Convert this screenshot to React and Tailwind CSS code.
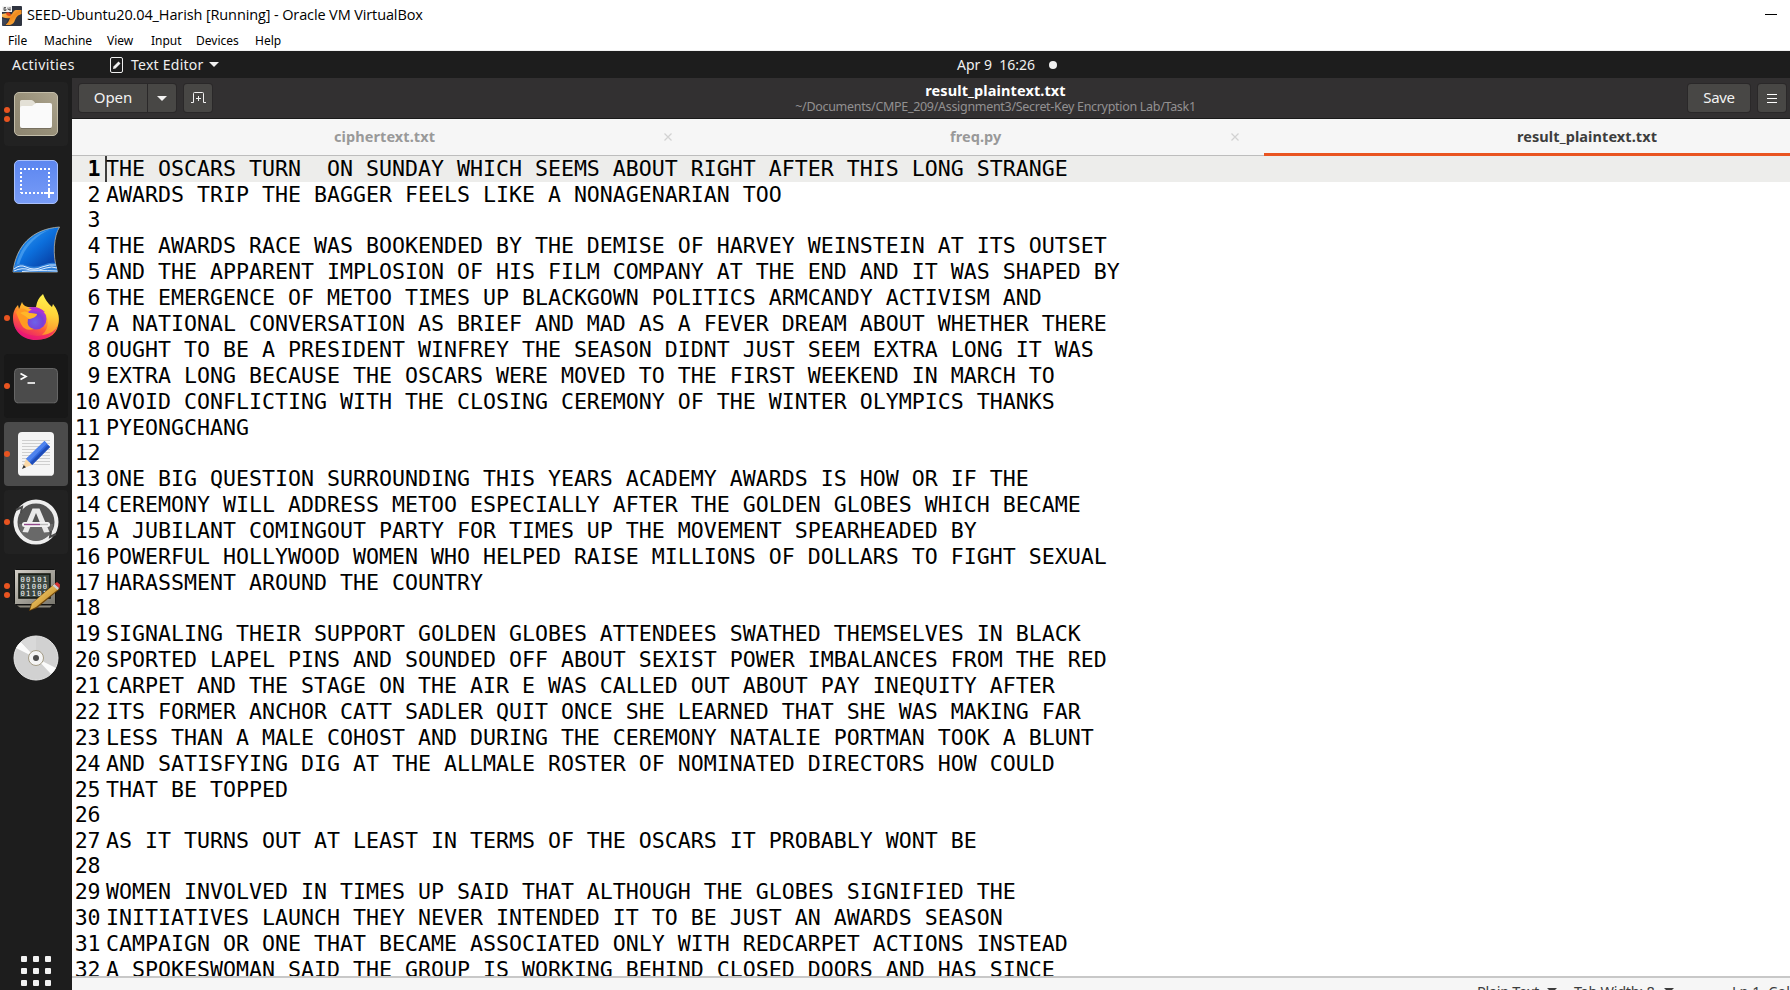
import React from 'react';

const LINES = [
  'THE OSCARS TURN  ON SUNDAY WHICH SEEMS ABOUT RIGHT AFTER THIS LONG STRANGE',
  'AWARDS TRIP THE BAGGER FEELS LIKE A NONAGENARIAN TOO',
  '',
  'THE AWARDS RACE WAS BOOKENDED BY THE DEMISE OF HARVEY WEINSTEIN AT ITS OUTSET',
  'AND THE APPARENT IMPLOSION OF HIS FILM COMPANY AT THE END AND IT WAS SHAPED BY',
  'THE EMERGENCE OF METOO TIMES UP BLACKGOWN POLITICS ARMCANDY ACTIVISM AND',
  'A NATIONAL CONVERSATION AS BRIEF AND MAD AS A FEVER DREAM ABOUT WHETHER THERE',
  'OUGHT TO BE A PRESIDENT WINFREY THE SEASON DIDNT JUST SEEM EXTRA LONG IT WAS',
  'EXTRA LONG BECAUSE THE OSCARS WERE MOVED TO THE FIRST WEEKEND IN MARCH TO',
  'AVOID CONFLICTING WITH THE CLOSING CEREMONY OF THE WINTER OLYMPICS THANKS',
  'PYEONGCHANG',
  '',
  'ONE BIG QUESTION SURROUNDING THIS YEARS ACADEMY AWARDS IS HOW OR IF THE',
  'CEREMONY WILL ADDRESS METOO ESPECIALLY AFTER THE GOLDEN GLOBES WHICH BECAME',
  'A JUBILANT COMINGOUT PARTY FOR TIMES UP THE MOVEMENT SPEARHEADED BY',
  'POWERFUL HOLLYWOOD WOMEN WHO HELPED RAISE MILLIONS OF DOLLARS TO FIGHT SEXUAL',
  'HARASSMENT AROUND THE COUNTRY',
  '',
  'SIGNALING THEIR SUPPORT GOLDEN GLOBES ATTENDEES SWATHED THEMSELVES IN BLACK',
  'SPORTED LAPEL PINS AND SOUNDED OFF ABOUT SEXIST POWER IMBALANCES FROM THE RED',
  'CARPET AND THE STAGE ON THE AIR E WAS CALLED OUT ABOUT PAY INEQUITY AFTER',
  'ITS FORMER ANCHOR CATT SADLER QUIT ONCE SHE LEARNED THAT SHE WAS MAKING FAR',
  'LESS THAN A MALE COHOST AND DURING THE CEREMONY NATALIE PORTMAN TOOK A BLUNT',
  'AND SATISFYING DIG AT THE ALLMALE ROSTER OF NOMINATED DIRECTORS HOW COULD',
  'THAT BE TOPPED',
  '',
  'AS IT TURNS OUT AT LEAST IN TERMS OF THE OSCARS IT PROBABLY WONT BE',
  '',
  'WOMEN INVOLVED IN TIMES UP SAID THAT ALTHOUGH THE GLOBES SIGNIFIED THE',
  'INITIATIVES LAUNCH THEY NEVER INTENDED IT TO BE JUST AN AWARDS SEASON',
  'CAMPAIGN OR ONE THAT BECAME ASSOCIATED ONLY WITH REDCARPET ACTIONS INSTEAD',
  'A SPOKESWOMAN SAID THE GROUP IS WORKING BEHIND CLOSED DOORS AND HAS SINCE',
];

function VBoxIcon() {
  return (
    <svg width="20" height="20" viewBox="0 0 20 20" className="mt-[2px] shrink-0">
      <defs>
        <linearGradient id="vb" x1="0" y1="0" x2="1" y2="1">
          <stop offset="0" stopColor="#ffd27a" />
          <stop offset=".5" stopColor="#f08a1c" />
          <stop offset="1" stopColor="#ffc45c" />
        </linearGradient>
      </defs>
      <rect width="20" height="20" rx="1" fill="#2f3440" />
      <path d="M0 8L5 7Q8 10 10 8Q12 4 14 4H19.500V8L16 9.500Q14 11 13 14Q12 18 8 19H3.500Q7 16 8 12Q5 13 0 11Z" fill="url(#vb)" />
      <path d="M4 7C6 5 9 7 9 9.500C7 10.500 4 9.500 4 7Z" fill="#e2471a" />
      <path d="M0 12.500Q3 14 6 13.500Q5 17 2 19.500H1L0 18.500Z" fill="#3f4657" />
      <rect width="10" height="6" fill="#f3f3f3" />
      <path d="M2 1.500h2M2 1.500v3h2v-1.500h-2M6 1.500v2h2.500M8 1v4" stroke="#555" fill="none" strokeWidth=".9" />
    </svg>
  );
}

function FilesIcon() {
  return (
    <svg width="46" height="46" viewBox="0 0 46 46">
      <defs>
        <linearGradient id="fi" x1="0" y1="1" x2="1" y2="0">
          <stop offset="0" stopColor="#8d8571" />
          <stop offset=".5" stopColor="#989079" />
          <stop offset="1" stopColor="#aca48e" />
        </linearGradient>
      </defs>
      <rect x="1.500" y="1.500" width="43" height="43" rx="4.500" fill="url(#fi)" stroke="#c3bda9" />
      <path d="M7 13V10.500Q7 9 8.500 9H18.500Q20 9 21 10.500L23 13H37Q39 13 39 15V23H7Z" fill="#e3e0d6" />
      <path d="M7 17Q7 15 9 15H19L23 12H37Q39 12 39 14V35Q39 37 37 37H9Q7 37 7 35Z" fill="#fafafa" />
      <path d="M8 37.500H38" stroke="#777060" />
    </svg>
  );
}

function ScreenshotIcon() {
  return (
    <svg width="46" height="46" viewBox="0 0 46 46">
      <defs>
        <linearGradient id="ss" x1="0" y1="0" x2="0" y2="1">
          <stop offset="0" stopColor="#5c86f0" />
          <stop offset="1" stopColor="#789cf7" />
        </linearGradient>
      </defs>
      <rect x="1.500" y="1.500" width="43" height="43" rx="4.500" fill="url(#ss)" stroke="#a9c0fb" />
      <path d="M7 10H38M8 34H31M8 13V34M36 13V28" stroke="#fff" strokeWidth="2" strokeDasharray="2 2" fill="none" />
      <path d="M36 29V39M31 34H41" stroke="#fff" strokeWidth="2" />
    </svg>
  );
}

function SharkIcon() {
  return (
    <svg width="48" height="48" viewBox="0 0 48 48">
      <defs>
        <linearGradient id="sh" x1="0.100" y1="0" x2="1" y2="1">
          <stop offset="0" stopColor="#38a0f5" />
          <stop offset=".45" stopColor="#0c6fdc" />
          <stop offset="1" stopColor="#052a8c" />
        </linearGradient>
      </defs>
      <path d="M1 46C4 20 20 3 47.500 1C42 10 40 28 45.500 46Z" fill="url(#sh)" stroke="#b9b6a8" strokeWidth=".8" />
      <path d="M4 40C8 22 20 8 38 3.500C22 10 11 24 7 39Z" fill="#67b5f7" opacity=".5" />
      <path d="M1 46L3 39Q9 37 14 39.500Q23 42 31 39Q38 36 43.500 37L45.500 46Z" fill="#2f7fd8" />
      <path d="M2 43Q8 38 14 41Q22 45 30 41Q38 38 44 39M2 45Q10 41 18 44Q28 45 34 42Q40 40 45 42M10 45.500Q25 44 45 45" fill="none" stroke="#dcecff" strokeWidth="1" />
    </svg>
  );
}

function FirefoxIcon() {
  return (
    <svg width="48" height="48" viewBox="0 0 48 48" className="-mt-[2px]">
      <defs>
        <linearGradient id="ff1" x1=".85" y1=".1" x2=".3" y2="1">
          <stop offset="0" stopColor="#fff24a" />
          <stop offset=".35" stopColor="#ffb02a" />
          <stop offset=".6" stopColor="#ff5f38" />
          <stop offset="1" stopColor="#e5127a" />
        </linearGradient>
        <linearGradient id="ff2" x1=".6" y1="0" x2=".5" y2="1">
          <stop offset="0" stopColor="#fff44f" />
          <stop offset=".5" stopColor="#ffd43a" />
          <stop offset="1" stopColor="#ff8f2c" />
        </linearGradient>
        <radialGradient id="ff3" cx=".45" cy=".65" r=".65">
          <stop offset="0" stopColor="#6d63e8" />
          <stop offset=".6" stopColor="#7a3fd6" />
          <stop offset="1" stopColor="#b435d8" />
        </radialGradient>
      </defs>
      <path d="M24 47C10 47 1 37 1 25C1 19 3 15 6 12L7 16L10 9Q11 13 16 14L30 14Q44 14 46 21Q50 46 24 47Z" fill="url(#ff1)" />
      <path d="M2 32Q7 46 24 47Q42 46 46 31Q40 43 25 43Q10 42 2 32Z" fill="#e91379" opacity=".55" />
      <path d="M31 1Q34 9 40 14L41 11Q49 21 46 32Q42 41 30 42Q38 35 35 24Q33 17 24 14Q25 6 31 1Z" fill="url(#ff2)" />
      <circle cx="24" cy="26" r="10.500" fill="url(#ff3)" />
      <path d="M16 15Q25 12 33 19Q27 18 22 18Q19 16 16 15Z" fill="#b32fd0" />
      <path d="M4 19Q11 12 17 20L25 21Q25 24 16 26Q14 34 22 36Q13 39 9 31Q6 25 4 19Z" fill="#ff9a22" />
      <path d="M8 20Q13 17 17 20L25 21Q24 25 17 26Q12 22 8 20Z" fill="#ffb629" />
    </svg>
  );
}

function TerminalIcon() {
  return (
    <svg width="46" height="38" viewBox="0 0 46 38">
      <rect x="1.500" y="1.500" width="43" height="34.500" rx="4" fill="#4b4b4b" stroke="#666" />
      <path d="M4 36.500H42" stroke="#2e2e2e" />
      <path d="M7.500 6.500L13 9.500L7.500 12.500" fill="none" stroke="#fff" strokeWidth="1.700" />
      <path d="M14.500 16H22" stroke="#fff" strokeWidth="1.600" />
    </svg>
  );
}

function EditorIcon() {
  return (
    <svg width="46" height="48" viewBox="0 0 46 48">
      <rect x="5" y="2" width="36" height="44" rx="4" fill="#f5f5f5" />
      <path d="M9 10.500H37M9 13.500H37M9 16.500H37M9 19.500H37M9 22.500H37M9 25.500H37M9 28.500H37M9 31.500H37M9 34.500H37" stroke="#cfcfcf" />
      <path d="M8 45.500H38" stroke="#ccc" />
      <path d="M31.500 11L37 17L19 35L13 29Z" fill="#2f66dc" />
      <path d="M31.500 11L34 13.500L16 32L13 29Z" fill="#4f83ee" />
      <path d="M35 15L37 17L19 35L17 33Z" fill="#1f4cb8" />
      <path d="M13 29L19 35L9.500 38.500Z" fill="#fbd9a7" />
      <path d="M10.700 35L13 37.200L9 39Z" fill="#333" />
    </svg>
  );
}

function SoftwareIcon() {
  return (
    <svg width="46" height="46" viewBox="0 0 46 46">
      <circle cx="23" cy="23" r="20.500" fill="#535353" stroke="#eee" strokeWidth="4" />
      <path d="M6 25H40A17 17 0 0 1 6 25Z" fill="#696969" />
      <path d="M3 11L9 8L8 14M43 35L37 38L38 32" fill="none" stroke="#4a4a4a" strokeWidth="2" />
      <path d="M19.500 9.500H26.500L36.500 33L31 33.500L23 14L15 33.500L9.500 33Z" fill="#e9e9e9" />
      <rect x="9" y="23" width="28" height="5" rx="2.500" fill="#f3f3f3" />
      <path d="M11 25.500H27" stroke="#924a8b" strokeWidth="1.400" />
      <path d="M27 25.500H35" stroke="#bbb" strokeWidth="1.400" />
    </svg>
  );
}

function HexIcon() {
  return (
    <svg width="48" height="48" viewBox="0 0 48 48">
      <defs>
        <linearGradient id="hx" x1="0" y1="0" x2="1" y2="1">
          <stop offset="0" stopColor="#d4d0c8" />
          <stop offset="1" stopColor="#77756c" />
        </linearGradient>
        <linearGradient id="pn" x1="0" y1="0" x2="1" y2="1">
          <stop offset="0" stopColor="#ffe48a" />
          <stop offset="1" stopColor="#b4720a" />
        </linearGradient>
      </defs>
      <rect x="2.500" y="3.500" width="41" height="35" rx="1" fill="url(#hx)" stroke="#111" />
      <path d="M5 39.500H40L38 41.500H8Z" fill="#8b877c" />
      <rect x="7" y="8" width="31" height="24" fill="#3d4741" stroke="#15170f" strokeWidth="1.600" />
      <g fill="#f5f5f5" fontFamily="'DejaVu Sans Mono', monospace" fontSize="7.200" letterSpacing="1.250">
        <text x="8.500" y="15.500">00101</text>
        <text x="8.500" y="22.500">01000</text>
        <text x="8.500" y="29.500">01101</text>
      </g>
      <path d="M42 18L48 23L25 42L17 45L19 38Z" fill="#6e450a" />
      <path d="M42 18.500L46.500 23L24 41L18 44L20 37.500Z" fill="url(#pn)" />
      <path d="M42.500 18L45 16L48 18.500L47.500 22.500Z" fill="#d93434" />
      <path d="M40.500 19.500L42.500 18L47 22L45.500 24Z" fill="#cfcfd6" />
    </svg>
  );
}

function DiscIcon() {
  return (
    <svg width="46" height="46" viewBox="0 0 46 46">
      <circle cx="23" cy="23" r="22" fill="#d1d1d1" stroke="#e8e8e8" />
      <path d="M23 23L3 13A22 22 0 0 1 8 7ZM23 23L43 33A22 22 0 0 1 38 39Z" fill="#fbfbfb" />
      <path d="M23 23L8 7A22 22 0 0 1 23 1Z" fill="#d9d9d9" />
      <circle cx="23" cy="23" r="7.500" fill="#f5f5f5" stroke="#a49c86" strokeWidth="1" />
      <circle cx="23" cy="23" r="3" fill="#4e4e4e" />
    </svg>
  );
}

const DOCK = [
  { Icon: FilesIcon, dots: 2, tile: 'bg-[#222222]' },
  { Icon: ScreenshotIcon, dots: 0, tile: '' },
  { Icon: SharkIcon, dots: 0, tile: '' },
  { Icon: FirefoxIcon, dots: 1, tile: '' },
  { Icon: TerminalIcon, dots: 1, tile: 'bg-[#181818]' },
  { Icon: EditorIcon, dots: 1, tile: 'bg-[#4b4b4b]' },
  { Icon: SoftwareIcon, dots: 1, tile: 'bg-[#222222]' },
  { Icon: HexIcon, dots: 2, tile: '' },
  { Icon: DiscIcon, dots: 0, tile: '' },
];

function Dock() {
  return (
    <aside className="flex w-[72px] shrink-0 flex-col justify-between bg-[#1d1d1d] pt-1 pb-1">
      <div className="flex flex-col gap-1 px-1">
        {DOCK.map(({ Icon, dots, tile }, i) => (
          <div key={i} className={'relative flex h-16 w-16 items-center justify-center rounded-[4px] ' + tile}>
            <div className="absolute left-0 flex flex-col gap-[3px]">
              {Array.from({ length: dots }, (_, d) => (
                <span key={d} className="h-[6px] w-[6px] rounded-full bg-[#e95420]" />
              ))}
            </div>
            <Icon />
          </div>
        ))}
      </div>
      <div className="grid w-[30px] grid-cols-3 gap-[6px] self-center">
        {Array.from({ length: 9 }, (_, i) => (
          <span key={i} className="h-[6px] w-[6px] rounded-[1px] bg-[#f2f2f2]" />
        ))}
      </div>
    </aside>
  );
}

function Caret({ className }) {
  return (
    <svg width="10" height="5" viewBox="0 0 10 5" className={className}>
      <path d="M0 0H10L5 5Z" fill="currentColor" />
    </svg>
  );
}

function TabClose({ className }) {
  return (
    <svg width="8" height="8" viewBox="0 0 8 8" className={'shrink-0 ' + className}>
      <path d="M.5 .5L7.500 7.500M7.500 .5L.5 7.500" stroke="#d2d2d2" strokeWidth="1.200" />
    </svg>
  );
}

const BTN = 'flex h-7 items-center justify-center bg-[#484745] shadow-[0_0_0_1px_#2a2829]';

function HeaderBar() {
  return (
    <header className="grid h-[41px] shrink-0 grid-cols-[400px_1fr_400px] border-b border-[#1a1a1a] bg-[#323031] text-[#f2f2f2]">
      <div className="flex pt-[6px] pl-[7px] text-[15px]">
        <div className={BTN + ' w-[68px] rounded-l-[3px] pb-[2px] tracking-[-0.1px]'}>Open</div>
        <div className={BTN + ' ml-px w-7 rounded-r-[3px]'}>
          <Caret />
        </div>
        <div className={BTN + ' ml-2 w-7 rounded-[3px]'}>
          <svg width="15" height="12" viewBox="0 0 15 12" fill="none" stroke="currentColor">
            <path d="M0 10.500H2.500V1.500Q2.500 .5 3.500 .5H11.500Q12.500 .5 12.500 1.500V10.500H15M5 6.500H10M7.500 4V9" />
          </svg>
        </div>
      </div>
      <div className="flex flex-col items-center pt-[3px] pl-[129px]">
        <div className="h-[19px] text-[14.500px] leading-[18px] font-bold tracking-[0.100px] whitespace-nowrap text-white">result_plaintext.txt</div>
        <div className="text-[12.500px] leading-[14px] tracking-[-0.305px] whitespace-nowrap text-[#929191]">
          ~/Documents/CMPE_209/Assignment3/Secret-Key Encryption Lab/Task1
        </div>
      </div>
      <div className="flex justify-end gap-2 pt-[6px] pr-1 text-[15px]">
        <div className={BTN + ' w-[62px] rounded-[3px] pb-[2px] tracking-[-0.300px]'}>Save</div>
        <div className={BTN + ' w-7 rounded-[3px]'}>
          <svg width="10" height="9" viewBox="0 0 10 9" stroke="#fff">
            <path d="M0 .5H10M0 4.500H10M0 8.500H10" />
          </svg>
        </div>
      </div>
    </header>
  );
}

function Tabs() {
  return (
    <div className="flex h-[37px] shrink-0 bg-[#f6f6f6] text-[14.500px] font-bold tracking-[0.080px] text-[#999]">
      <div className="flex w-[596px] items-center border-b border-[#bdbdbd] pl-[262px]">
        <span className="w-[327px] whitespace-nowrap">ciphertext.txt</span>
      </div>
      <div className="flex w-[596px] items-center border-b border-[#bdbdbd]">
        <TabClose className="-ml-1" />
        <span className="ml-[278px] w-[281px] whitespace-nowrap">freq.py</span>
        <TabClose className="" />
      </div>
      <div className="flex flex-1 items-center border-b-[3px] border-[#e95420] pt-[2px] pl-[253px] text-[#3d3d3d]">
        <span className="whitespace-nowrap">result_plaintext.txt</span>
      </div>
    </div>
  );
}

function Editor() {
  return (
    <main className="min-h-0 flex-1 overflow-hidden bg-white font-['DejaVu_Sans_Mono',monospace] text-[21.600px] tracking-[-0.004px] text-black">
      {LINES.map((line, i) => (
        <div
          key={i}
          className={
            'flex whitespace-pre ' +
            (line ? 'h-[26px] leading-[26px] ' : 'h-[25px] leading-[24px] ') +
            (i === 0 ? 'bg-[#ededeb]' : '')
          }
        >
          <span className={'w-[28px] shrink-0 text-right tracking-[-0.400px] ' + (i === 0 ? 'font-bold' : '')}>{i + 1}</span>
          <span className={'ml-[5px] w-[2px] shrink-0 ' + (i === 0 ? 'bg-[#3d3d3d]' : '')} />
          <span className="-ml-px">{line}</span>
        </div>
      ))}
    </main>
  );
}

function StatusBar() {
  return (
    <footer className="flex h-[14px] shrink-0 overflow-hidden border-t-2 border-[#c8c8c8] bg-[#f6f6f6] pl-[1405px] text-[14.500px] leading-[20px] whitespace-nowrap text-[#3d3d3d]">
      <div className="flex w-[97px] shrink-0 items-start pt-[3px]">
        <span className="w-[70px] tracking-[-0.300px]">Plain Text</span>
        <Caret className="mt-[7px]" />
      </div>
      <div className="flex w-[158px] shrink-0 items-start pt-[3px]">
        <span className="w-[90px] tracking-[-0.300px]">Tab Width: 8</span>
        <Caret className="mt-[7px]" />
      </div>
      <span className="shrink-0 pt-[3px]">Ln 1, Col 1</span>
    </footer>
  );
}

export default function App() {
  return (
    <div className="flex h-[990px] w-[1790px] flex-col overflow-hidden bg-white font-['Noto_Sans','Open_Sans',sans-serif]">
      <div className="flex h-[29px] shrink-0 items-center pl-[2px]">
        <VBoxIcon />
        <span className="ml-[5px] flex-1 font-['Open_Sans',sans-serif] text-[14.500px] tracking-[-0.120px] whitespace-nowrap text-black">
          SEED-Ubuntu20.04_Harish [Running] - Oracle VM VirtualBox
        </span>
        <span className="mr-[13px] h-px w-3 bg-black" />
      </div>
      <nav className="flex h-[22px] shrink-0 items-center border-b border-[#f0f0f0] pt-[2px] pl-2 text-[12px] whitespace-nowrap text-black">
        <span className="w-9">File</span>
        <span className="w-[63px]">Machine</span>
        <span className="w-11">View</span>
        <span className="w-[45px]">Input</span>
        <span className="w-[59px]">Devices</span>
        <span>Help</span>
      </nav>
      <div className="flex h-[27px] shrink-0 items-center bg-[#1d1d1d] pl-3 text-[14px] whitespace-nowrap text-[#f0f0f0]">
        <span className="w-[98px] tracking-[0.450px]">Activities</span>
        <svg width="13" height="16" viewBox="0 0 13 16" fill="none" stroke="currentColor" className="shrink-0">
          <rect x=".5" y=".5" width="12" height="15" rx="1.500" />
          <path d="M3 12L3.500 9.500L8.500 4.500L10.500 6.500L5.500 11.500Z" fill="currentColor" stroke="none" />
        </svg>
        <span className="ml-2 w-[78px] tracking-[0.250px]">Text Editor</span>
        <Caret />
        <span className="ml-[738px] w-[92px] whitespace-pre">Apr 9  16:26</span>
        <span className="h-[8px] w-[8px] rounded-full bg-[#f0f0f0]" />
      </div>
      <div className="flex min-h-0 flex-1">
        <Dock />
        <div className="flex min-w-0 flex-1 flex-col">
          <HeaderBar />
          <Tabs />
          <Editor />
          <StatusBar />
        </div>
      </div>
    </div>
  );
}
